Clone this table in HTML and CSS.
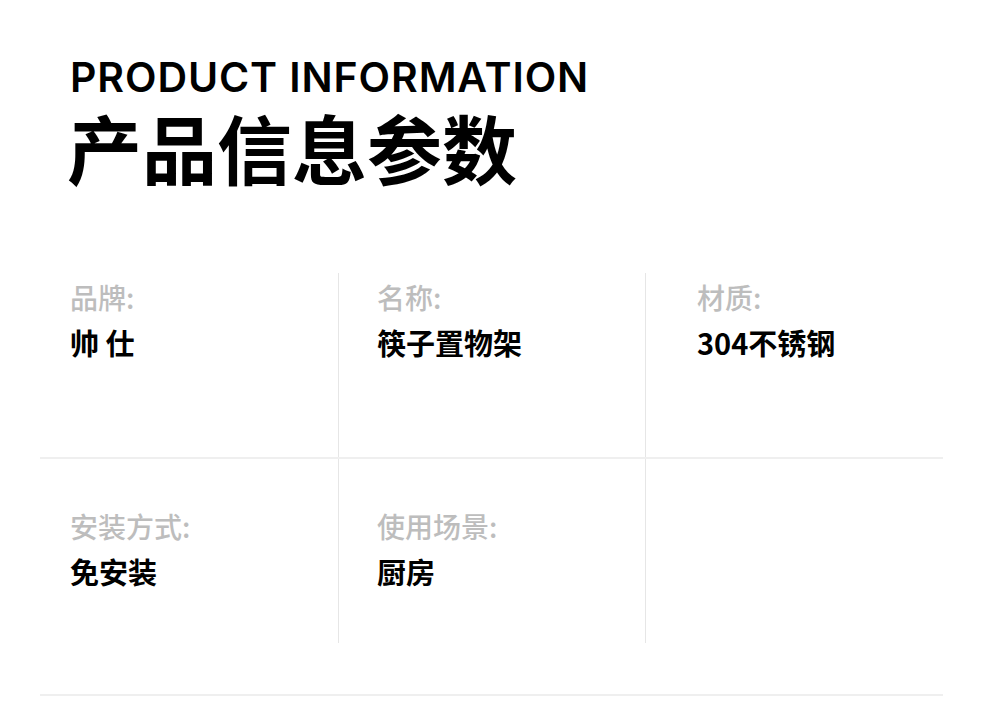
FILE: index.html
```html
<!DOCTYPE html>
<html lang="zh-CN">
<head>
<meta charset="utf-8">
<title>产品信息参数</title>
<link rel="stylesheet" href="styles.css">
</head>
<body>
<main class="page">
  <header class="head">
    <h2 class="en-title">PRODUCT INFORMATION</h2>
    <h1 class="cn-title">产品信息参数</h1>
  </header>
  <section class="specs">
    <div class="row row-top">
      <div class="cell c1"><div class="label">品牌:</div><div class="value">帅 仕</div></div>
      <div class="cell c2"><div class="label">名称:</div><div class="value">筷子置物架</div></div>
      <div class="cell c3"><div class="label">材质:</div><div class="value">304不锈钢</div></div>
    </div>
    <div class="row row-bottom">
      <div class="cell c1"><div class="label">安装方式:</div><div class="value">免安装</div></div>
      <div class="cell c2"><div class="label">使用场景:</div><div class="value">厨房</div></div>
      <div class="cell c3"></div>
    </div>
  </section>
  <hr class="rule">
</main>
</body>
</html>
```
FILE: styles.css
```css
html, body {
  margin: 0;
  padding: 0;
  background: #ffffff;
}
body {
  font-family: "Noto Sans CJK SC", "Noto Sans", sans-serif;
  color: #000;
}
.page {
  width: 990px;
  height: 718px;
  overflow: hidden;
  box-sizing: border-box;
  padding: 0 47px 0 40px;
}
.head {
  padding: 57px 0 0 30px;
}
.en-title {
  margin: 0;
  font-family: "Inter", "Noto Sans", sans-serif;
  font-weight: 600;
  font-size: 41px;
  line-height: 40px;
  letter-spacing: 0.9px;
  color: #000;
}
.cn-title {
  margin: 0;
  margin-left: -3px;
  padding-top: 10px;
  font-family: "Noto Sans CJK SC", sans-serif;
  font-weight: 700;
  font-size: 75px;
  line-height: 80px;
  color: #000;
}
.specs {
  margin-top: 86px;
  width: 903px;
}
.row {
  display: grid;
  grid-template-columns: 298px 307px 298px;
  height: 184px;
}
.row-top {
  border-bottom: 2px solid #efefef;
}
.cell {
  box-sizing: border-box;
  padding-top: 4px;
}
.row-bottom .cell {
  padding-top: 47px;
}
.c1 { padding-left: 30px; }
.c2 { padding-left: 38px; border-left: 1px solid #e6e6e6; }
.c3 { padding-left: 51px; border-left: 1px solid #e6e6e6; }
.label {
  font-size: 28px;
  line-height: 40px;
  font-weight: 500;
  color: #bdbdbd;
}
.value {
  margin-top: 5px;
  font-size: 29px;
  line-height: 40px;
  font-weight: 700;
  color: #000;
}
.rule {
  margin: 51px 0 0 0;
  width: 903px;
  border: 0;
  border-top: 2px solid #efefef;
  height: 0;
}
```
